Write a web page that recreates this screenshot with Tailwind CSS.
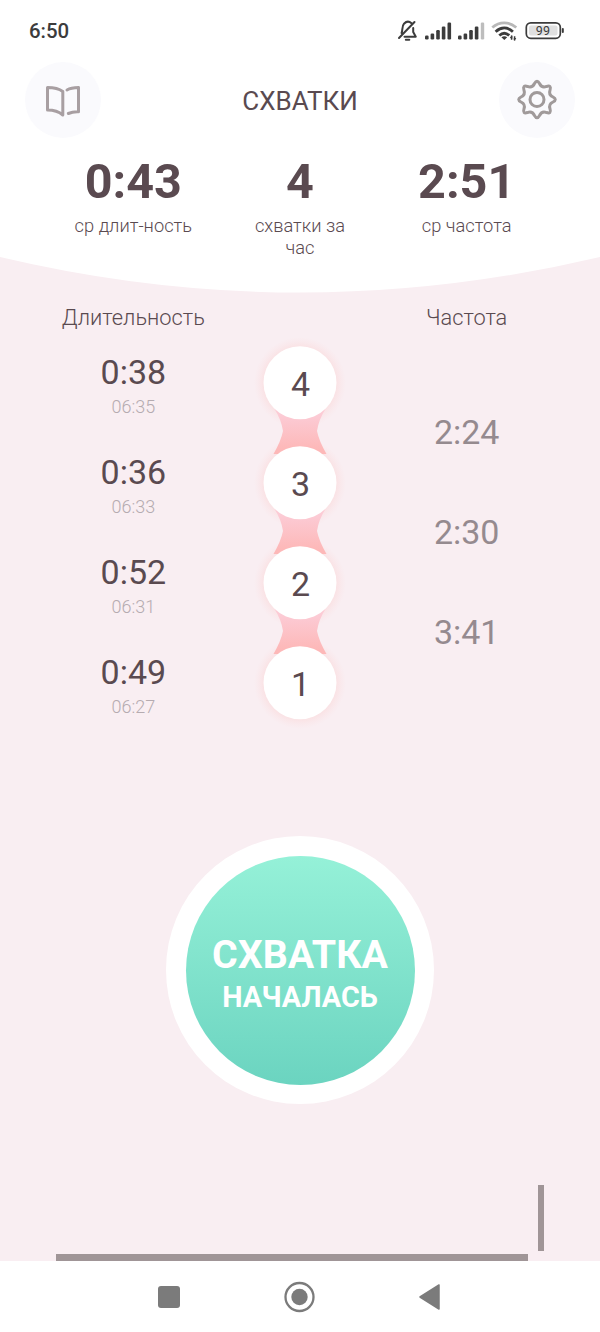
<!DOCTYPE html>
<html lang="ru">
<head>
<meta charset="utf-8">
<title>Схватки</title>
<script src="https://cdn.jsdelivr.net/npm/@tailwindcss/browser@4"></script>
</head>
<body class="bg-white">
<div class="w-[600px] h-[1332px] flex flex-col overflow-hidden bg-[#f9eef2] font-[Roboto,sans-serif] text-[#5a4a50]">

  <header class="relative h-[293px] shrink-0">
    <svg class="absolute inset-0" width="600" height="293" viewBox="0 0 600 293"><path d="M0 0H600V257Q450 292.500 300 292.500Q150 292.500 0 257Z" fill="#fff"/></svg>
    <div class="relative flex flex-col">
      <div class="h-[61px] pl-[29px] pr-[35px] flex items-center justify-between">
        <span class="text-[20.400px] font-medium text-[#3c3c3c] leading-6">6:50</span>
        <svg width="170" height="28" viewBox="395 16.500 170 28" fill="none">
          <g stroke="#3c3c3c" stroke-width="2" stroke-linecap="round" stroke-linejoin="round">
            <path d="M399 37.500L414.500 21.500M401.500 32.500C403 30 401.500 26 404 23.200C406.500 20.600 409.500 21 411.500 22.800M413.200 27.500V31.500L415.800 36.200H404.500"/>
            <path d="M405.800 39.300H409.300"/>
          </g>
          <g fill="#3c3c3c">
            <rect x="425" y="35" width="3.600" height="4" rx="1.200"/><rect x="430.600" y="33" width="3.600" height="6" rx="1.200"/><rect x="436.200" y="29.500" width="3.600" height="9.500" rx="1.200"/><rect x="441.800" y="26" width="3.600" height="13" rx="1.200"/><rect x="447.500" y="22" width="3.600" height="17" rx="1.200"/>
            <rect x="458" y="35" width="3.600" height="4" rx="1.200"/><rect x="463.600" y="33" width="3.600" height="6" rx="1.200"/><rect x="469.200" y="29.500" width="3.600" height="9.500" rx="1.200"/><rect x="474.800" y="26" width="3.600" height="13" rx="1.200"/><rect x="480.800" y="22" width="3.400" height="17" rx="1.200" fill="#bdbdbd"/>
          </g>
          <g stroke="#3c3c3c" stroke-width="2.800">
            <path d="M492.300 27C499.500 20.800 509 20.800 516.300 27" stroke="#b8b8b8"/>
            <path d="M495.600 31.200C501 26.200 507.500 26.200 512.900 31.200M499.300 35C502.500 32 506 32 509.200 35"/>
            <path d="M501.400 36.800L504.300 39.600L507.200 36.800Q504.300 34.800 501.400 36.800Z" fill="#3c3c3c" stroke="none"/>
            <path d="M511.600 35V39.200M514.600 35.800V40" stroke-width="1.500"/><path d="M509.800 37.500L511.600 35L512.300 35.500V38ZM516.300 37.500L514.600 40L513.800 39.500V37.500Z" fill="#3c3c3c" stroke="none"/>
          </g>
          <rect x="526.300" y="22.300" width="34" height="15.500" rx="4.500" stroke="#3c3c3c" stroke-width="1.700"/>
          <rect x="529" y="25" width="28.500" height="10" rx="2" fill="#e0e0e0"/>
          <path d="M562.800 28.500V31.500" stroke="#3c3c3c" stroke-width="2" stroke-linecap="round"/>
          <text x="543" y="34.800" text-anchor="middle" font-family="Roboto" font-size="12.500" letter-spacing=".3" fill="#3c3c3c">99</text>
        </svg>
      </div>
      <div class="h-[77px] px-[25px] flex items-center justify-between">
        <button class="size-[76px] rounded-full bg-[#fafafd] flex items-center justify-center">
          <svg width="76" height="76" viewBox="25 61.500 76 76" fill="none" stroke="#a89fa2" stroke-width="3" stroke-linejoin="round" stroke-linecap="round"><path d="M47.500 87Q57.500 87 62.800 91V114.500Q57 109.500 47.500 109.500ZM67 89.500Q71 87.200 78.500 87V111.300Q73 111 68.300 113"/></svg>
        </button>
        <h1 class="text-[26px] leading-8 mt-[3px]">СХВАТКИ</h1>
        <button class="size-[76px] rounded-full bg-[#fafafd] flex items-center justify-center">
          <svg width="44" height="44" viewBox="-22 -21.500 44 44" fill="none" stroke="#a09a9a" stroke-width="3"><path stroke-linejoin="round" d="M16 -2.500Q20.600 0 16 2.500Q11.300 4.700 13.050 9.550Q14.600 14.600 9.550 13.050Q4.700 11.300 2.500 16Q0 20.600 -2.500 16Q-4.700 11.300 -9.550 13.050Q-14.600 14.600 -13.050 9.550Q-11.300 4.700 -16 2.500Q-20.600 0 -16 -2.500Q-11.300 -4.700 -13.050 -9.550Q-14.600 -14.600 -9.550 -13.050Q-4.700 -11.300 -2.500 -16Q0 -20.600 2.500 -16Q4.700 -11.300 9.550 -13.050Q14.600 -14.600 13.050 -9.550Q11.300 -4.700 16 -2.500Z"/><circle r="7"/></svg>
        </button>
      </div>
      <div class="grid grid-cols-3 px-[50px] pt-4 text-center">
        <div><div class="text-[48.500px] leading-[56px] font-bold">0:43</div><div class="mt-[5px] text-[18.300px] leading-[22px] font-light">ср длит-ность</div></div>
        <div><div class="text-[48.500px] leading-[56px] font-bold">4</div><div class="mt-[5px] text-[18.300px] leading-[22px] font-light">схватки за<br>час</div></div>
        <div><div class="text-[48.500px] leading-[56px] font-bold">2:51</div><div class="mt-[5px] text-[18.300px] leading-[22px] font-light">ср частота</div></div>
      </div>
    </div>
  </header>

  <main class="flex-1 flex flex-col">
    <div class="grid grid-cols-3 px-[50px] pt-[11px] text-center text-[21.800px] leading-7 font-light">
      <span>Длительность</span><span></span><span>Частота</span>
    </div>
    <div class="grid grid-cols-3 px-[50px] h-[400px] text-center">
      <div class="flex flex-col pt-5">
        <div class="h-[100px]"><div class="text-[34px] leading-10">0:38</div><div class="mt-1 text-[18px] leading-[22px] font-light text-[#b5abb0]">06:35</div></div>
        <div class="h-[100px]"><div class="text-[34px] leading-10">0:36</div><div class="mt-1 text-[18px] leading-[22px] font-light text-[#b5abb0]">06:33</div></div>
        <div class="h-[100px]"><div class="text-[34px] leading-10">0:52</div><div class="mt-1 text-[18px] leading-[22px] font-light text-[#b5abb0]">06:31</div></div>
        <div class="h-[100px]"><div class="text-[34px] leading-10">0:49</div><div class="mt-1 text-[18px] leading-[22px] font-light text-[#b5abb0]">06:27</div></div>
      </div>
      <svg class="mx-auto" width="120" height="400" viewBox="240 332 120 400">
        <defs>
          <linearGradient id="link" x1="0" y1="0" x2="0" y2="1"><stop offset=".15" stop-color="#fccbd5"/><stop offset=".9" stop-color="#fdb8b8"/></linearGradient>
          <radialGradient id="glow"><stop offset=".78" stop-color="#fae2e4"/><stop offset="1" stop-color="#fae6e9" stop-opacity="0"/></radialGradient>
          <path id="neck" d="M274 408Q281.500 420 283 431Q281 441 273.500 454H326.500Q319 441 317 431Q318.500 420 326 408Z" fill="url(#link)"/>
        </defs>
        <g fill="url(#glow)"><circle cx="300" cy="383" r="46"/><circle cx="300" cy="483" r="46"/><circle cx="300" cy="583" r="46"/><circle cx="300" cy="683" r="46"/></g>
        <use href="#neck"/><use href="#neck" y="100"/><use href="#neck" y="200"/>
        <g fill="#fff"><circle cx="300" cy="382.800" r="36.500"/><circle cx="300" cy="482.800" r="36.500"/><circle cx="300" cy="582.800" r="36.500"/><circle cx="300" cy="682.800" r="36.500"/></g>
        <g font-family="Roboto" font-size="34" fill="#5a4a50" text-anchor="middle"><text x="300.500" y="396">4</text><text x="300.500" y="496">3</text><text x="300.500" y="596">2</text><text x="300.500" y="696">1</text></g>
      </svg>
      <div class="flex flex-col pt-[50px] text-[34px] leading-[100px] text-[#958a8f]">
        <span>2:24</span><span>2:30</span><span>3:41</span>
      </div>
    </div>
    <button class="mt-[104px] mx-auto size-[268px] rounded-full bg-white p-[19.500px]">
      <span class="size-full rounded-full bg-linear-to-b from-[#95f1d8] to-[#6bd4c0] flex flex-col items-center justify-center text-white font-bold pt-[11px]">
        <span class="text-[39.300px] leading-[44px]">СХВАТКА</span><span class="text-[28.800px] leading-[41px]">НАЧАЛАСЬ</span>
      </span>
    </button>
    <div class="mt-auto flex flex-col">
      <div class="h-[66px] w-1.5 ml-[538px] bg-[#a09597]"></div>
      <div class="mt-[3px] h-[7px] w-[472px] ml-[56px] bg-[#a09597]"></div>
    </div>
  </main>

  <nav class="h-[71px] shrink-0 bg-white">
    <svg width="600" height="71" viewBox="0 1261 600 71" fill="#7b7b7b"><rect x="158" y="1286" width="22" height="22" rx="3"/><circle cx="299.500" cy="1297" r="14" fill="none" stroke="#7b7b7b" stroke-width="2.300"/><circle cx="299.500" cy="1297" r="8.200"/><path d="M420 1297L439 1285V1309Z" stroke="#7b7b7b" stroke-width="1.500" stroke-linejoin="round"/></svg>
  </nav>
</div>
</body>
</html>
